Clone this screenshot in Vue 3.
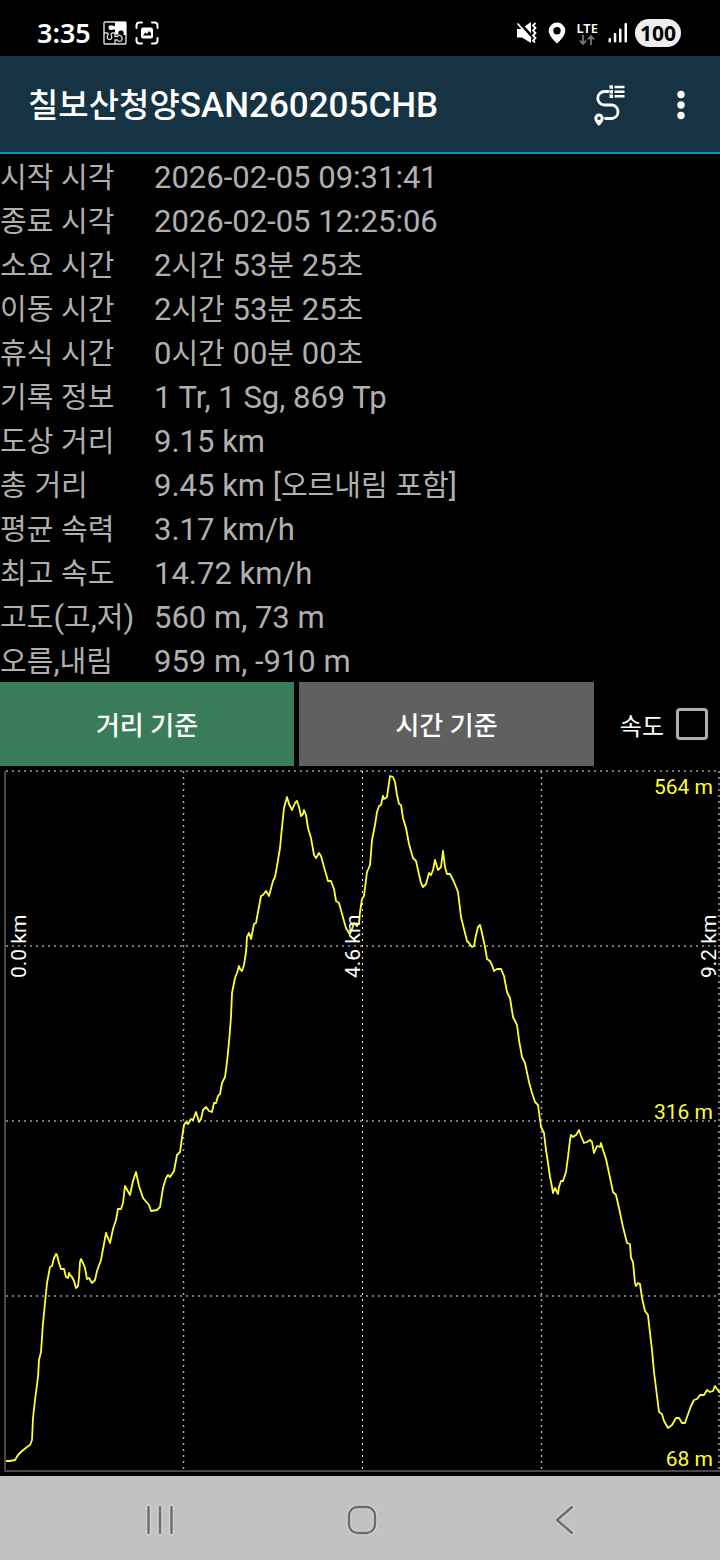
<script setup>
import { ref } from 'vue'

const stats = [
  ['시작 시각', '2026-02-05 09:31:41'],
  ['종료 시각', '2026-02-05 12:25:06'],
  ['소요 시간', '2시간 53분 25초'],
  ['이동 시간', '2시간 53분 25초'],
  ['휴식 시간', '0시간 00분 00초'],
  ['기록 정보', '1 Tr, 1 Sg, 869 Tp'],
  ['도상 거리', '9.15 km'],
  ['총 거리', '9.45 km [오르내림 포함]'],
  ['평균 속력', '3.17 km/h'],
  ['최고 속도', '14.72 km/h'],
  ['고도(고,저)', '560 m, 73 m'],
  ['오름,내림', '959 m, -910 m'],
]

// Hangul runs are set a little smaller than the Latin text around them.
const runs = (text) =>
  text
    .split(/([가-힣]+)/)
    .filter(Boolean)
    .map((t) => ({ t, ko: /[가-힣]/.test(t) }))

const mode = ref('distance')
const showSpeed = ref(false)

const gridY = [1, 176, 351, 526]

const profile = `6,691 10,691 15,690 18,685 22,681 27,677 30,675 32,670 33,648 35,630 38,607 39,590 41,582 43,553 45,533 47,513
50,497 52,496 54,488 56,484 57,485 59,493 61,499 64,499 66,507 68,508 69,503 70,505 72,507 74,511 76,518 78,516
79,508 80,492 81,489 83,493 85,498 87,509 89,508 92,513 95,510 97,501 101,490 103,479 104,474 106,463 108,468 110,473
113,459 116,450 118,439 121,439 123,433 125,416 130,425 133,411 136,402 139,416 143,428 149,435 151,441 157,440 160,437
163,418 166,408 168,405 170,407 174,401 177,385 180,382 182,368 184,355 186,352 188,354 191,349 193,350 196,342 199,352
201,349 203,340 206,337 209,341 212,342 214,333 216,333 218,326 220,324 222,313 225,307 227,292 229,272 231,247 232,223
235,208 237,203 239,196 240,199 242,201 244,195 246,182 247,167 249,163 251,169 254,154 256,153 258,142 261,126 263,125
266,121 269,126 273,111 275,107 277,96 280,78 282,57 284,38 287,27 289,34 292,40 295,33 297,31 299,37 301,46 303,44
304,40 306,45 308,58 311,68 314,85 316,88 319,83 321,86 324,97 328,111 331,111 334,119 336,131 339,133 342,144 346,158
349,163 350,164 352,159 354,153 357,156 359,153 360,142 362,129 364,126 367,102 370,95 372,70 375,55 377,42 379,36
381,35 383,26 384,29 387,27 388,20 390,6 393,7 395,12 397,25 399,34 401,35 403,48 406,58 409,74 413,88 416,91 418,100
421,113 423,117 426,114 429,103 431,105 433,100 435,90 438,100 441,97 443,81 445,97 447,104 450,104 454,112 458,122
461,147 467,171 469,173 472,177 474,176 476,165 478,157 480,155 482,163 485,177 487,189 490,191 492,195 494,201 497,199
501,199 504,206 507,222 510,228 513,247 517,255 519,270 522,287 525,293 529,312 532,323 535,332 538,335 541,357 544,363
546,380 548,393 550,407 552,417 553,423 555,418 558,424 559,417 561,411 563,411 566,402 568,387 570,370 571,365 573,367
576,365 579,360 581,366 584,373 587,372 590,370 592,372 594,383 597,376 600,377 601,373 603,380 606,389 609,403 613,422
616,425 619,438 623,457 627,473 630,474 631,488 633,492 635,513 636,516 638,513 640,514 642,528 645,541 648,545 650,563
652,580 654,602 656,618 659,642 662,644 664,651 668,658 672,655 676,648 679,648 682,653 685,653 687,647 691,636 694,630
697,629 700,625 704,625 707,620 710,622 713,621 715,616 717,619 720,623`
</script>

<template>
  <div class="screen">
    <header class="status">
      <div class="status-group">
        <span class="clock">3:35</span>
        <svg class="puzzle" width="24" height="24" viewBox="0 0 24 24">
          <rect x="1" y="1" width="22" height="22" rx="1" fill="none" stroke="#ddd" stroke-width="1.4" />
          <path d="M12 1H23V14H20.500Q21.500 9.500 18 9.500Q14.500 9.500 15.500 13.500H12V9Q10.500 7.500 9.500 9Q5.500 9.500 5.500 6.500Q5.500 3.500 9.500 4.500Q11 6 12 4.500Z" fill="#fff" />
          <path d="M1 12H4.500Q6 13 4.500 14.500Q3.500 18.500 6.500 18.500Q9.500 18.500 8.500 14.500Q7.500 13 9 12H12V15.500H14.500Q15 13.500 17.500 14.500Q20.500 17 18 20Q15.500 21 14.500 19H12V23" fill="none" stroke="#ddd" stroke-width="1.300" />
        </svg>
        <svg width="24" height="24" viewBox="0 0 24 24" fill="none">
          <path d="M1.500 7V4.500Q1.500 1.500 4.500 1.500H7M17 1.500H19.500Q22.500 1.500 22.500 4.500V7M22.500 17V19.500Q22.500 22.500 19.500 22.500H17M7 22.500H4.500Q1.500 22.500 1.500 19.500V17" stroke="#fff" stroke-width="2" stroke-linecap="round" />
          <rect x="6" y="6.500" width="12" height="11" rx="2" fill="#fff" />
          <path d="M8 14.500L10.500 11.500L12 13L14 10L16 12V14.500Z" fill="#000" />
        </svg>
      </div>
      <div class="status-group right">
        <svg class="mute" width="22" height="24" viewBox="0 0 22 24">
          <path d="M1 8H5L15 1V22L6 16.500H1Z" fill="#fff" />
          <path d="M3 1L17 17" stroke="#000" stroke-width="3" />
          <path d="M1.500 2.500L15 17.500" stroke="#fff" stroke-width="1.800" />
          <path d="M19.500 2L17 4.500L19.500 7L17 9.500L19.500 12L17 14.500L19.500 17L17 19.500L19 21.500" fill="none" stroke="#fff" stroke-width="1.800" />
        </svg>
        <svg class="pin" width="18" height="22" viewBox="0 0 18 22">
          <path d="M9 0.500A8.300 8.300 0 0 0 0.700 8.800C0.700 14.500 9 21.500 9 21.500S17.300 14.500 17.300 8.800A8.300 8.300 0 0 0 9 0.500ZM9 5A3.700 3.700 0 1 1 9 12.400A3.700 3.700 0 1 1 9 5Z" fill="#fff" fill-rule="evenodd" />
        </svg>
        <div class="lte">
          <span>LTE</span>
          <svg width="16" height="10" viewBox="0 0 16 10" fill="none" stroke="#777" stroke-width="1.800">
            <path d="M4 0V9M0.800 5.500L4 9L7.200 5.500M12 10V1M8.800 4.500L12 1L15.200 4.500" />
          </svg>
        </div>
        <svg class="signal" width="20" height="20" viewBox="0 0 20 20" fill="#fff">
          <rect x="0.500" y="15" width="2.500" height="4.500" rx="1" />
          <rect x="5.800" y="10" width="2.500" height="9.500" rx="1" />
          <rect x="11" y="5.500" width="2.500" height="14" rx="1" />
          <rect x="16.500" y="0" width="2.500" height="19.500" rx="1" />
        </svg>
        <span class="battery">100</span>
      </div>
    </header>

    <div class="appbar">
      <h1><span v-for="(r, i) in runs('칠보산청양SAN260205CHB')" :key="i" :class="{ ko: r.ko }">{{ r.t }}</span></h1>
      <button class="icon-btn" type="button" aria-label="경로 목록">
        <svg width="34" height="44" viewBox="0 0 34 44" fill="none" stroke="#fff">
          <path d="M15 8.500H11.500A6.500 6.500 0 0 0 11.500 22H19A6.800 6.800 0 0 1 19 35.500H12.500" stroke-width="2.800" stroke-linecap="round" />
          <path d="M21.500 4H31.500M21.500 8.700H31.500M21.500 13.300H31.500" stroke-width="2.400" />
          <path d="M16.500 4H20M16.500 8.700H20M16.500 13.300H20" stroke-width="3.600" />
          <path d="M6 30.500A4.700 4.700 0 0 0 1.300 35.200C1.300 38.500 6 43 6 43S10.700 38.500 10.700 35.200A4.700 4.700 0 0 0 6 30.500ZM6 33.500A1.700 1.700 0 1 1 6 36.900A1.700 1.700 0 1 1 6 33.500Z" fill="#fff" stroke="none" fill-rule="evenodd" />
        </svg>
      </button>
      <button class="icon-btn" type="button" aria-label="더보기">
        <svg width="8" height="30" viewBox="0 0 8 30" fill="#fff">
          <circle cx="4" cy="4.500" r="3.700" /><circle cx="4" cy="15" r="3.700" /><circle cx="4" cy="25.500" r="3.700" />
        </svg>
      </button>
    </div>

    <table class="stats">
      <tbody>
        <tr v-for="[label, value] in stats" :key="label">
          <th scope="row"><span v-for="(r, i) in runs(label)" :key="i" :class="{ ko: r.ko }">{{ r.t }}</span></th>
          <td><span v-for="(r, i) in runs(value)" :key="i" :class="{ ko: r.ko }">{{ r.t }}</span></td>
        </tr>
      </tbody>
    </table>

    <div class="controls">
      <button type="button" class="mode" :class="{ active: mode === 'distance' }" @click="mode = 'distance'">거리 기준</button>
      <button type="button" class="mode" :class="{ active: mode === 'time' }" @click="mode = 'time'">시간 기준</button>
      <label class="speed">속도<input v-model="showSpeed" type="checkbox" /></label>
    </div>

    <svg class="chart" viewBox="0 0 720 710" role="img" aria-label="고도 그래프">
      <g transform="translate(0 4)" fill="none">
        <g stroke="#777" stroke-width="2" stroke-dasharray="2 4">
          <path v-for="y in gridY" :key="y" :d="`M6 ${y}H720`" />
          <path d="M719 1V700" />
        </g>
        <g stroke-dasharray="2 4">
          <path d="M183.500 1V700M541.500 1V700" stroke="#aaa" stroke-width="1.500" />
          <path d="M362.500 1V700" stroke="#fff" />
        </g>
        <path d="M5 1V701H720" stroke="#484848" stroke-width="2" />
        <polyline :points="profile" stroke="#ffff30" stroke-width="1.800" stroke-linejoin="round" />
        <g fill="#ffff30" text-anchor="end">
          <text x="713" y="24">564 m</text>
          <text x="713" y="349">316 m</text>
          <text x="713" y="696">68 m</text>
        </g>
        <g fill="#fff">
          <text transform="translate(26 208) rotate(-90)">0.0 km</text>
          <text transform="translate(360 208) rotate(-90)">4.6 km</text>
          <text transform="translate(716 208) rotate(-90)">9.2 km</text>
        </g>
      </g>
    </svg>

    <nav class="navbar">
      <button type="button" aria-label="최근 앱">
        <svg width="34" height="34" viewBox="0 0 34 34" fill="none" stroke-linecap="round">
          <path d="M5.500 4V30M17 4V30M28.500 4V30" stroke="#d2d2d2" stroke-width="5" />
          <path d="M5.500 4V30M17 4V30M28.500 4V30" stroke="#6c6c6c" stroke-width="2.400" />
        </svg>
      </button>
      <button type="button" aria-label="홈">
        <svg width="34" height="34" viewBox="0 0 34 34" fill="none">
          <rect x="4" y="4" width="26" height="26" rx="8.500" stroke="#d2d2d2" stroke-width="5" />
          <rect x="4" y="4" width="26" height="26" rx="8.500" stroke="#6c6c6c" stroke-width="2.400" />
        </svg>
      </button>
      <button type="button" aria-label="뒤로">
        <svg width="34" height="34" viewBox="0 0 34 34" fill="none" stroke-linecap="round" stroke-linejoin="round">
          <path d="M25 4L10 17L25 30" stroke="#d2d2d2" stroke-width="5" />
          <path d="M25 4L10 17L25 30" stroke="#6c6c6c" stroke-width="2.400" />
        </svg>
      </button>
    </nav>
  </div>
</template>

<style>
body {
  background: #000;
}
</style>

<style scoped>
.screen {
  display: flex;
  flex-direction: column;
  min-height: 100vh;
  background: #000;
  color: #fff;
  font-family: Roboto, "Noto Sans CJK KR", sans-serif;
}
button {
  padding: 0;
  border: 0;
  background: none;
  color: inherit;
  font-family: inherit;
}
svg {
  display: block;
}
.status {
  display: flex;
  justify-content: space-between;
  align-items: center;
  height: 56px;
  padding: 10px 39px 0 37px;
  box-sizing: border-box;
  font-family: "Noto Sans", sans-serif;
}
.status-group {
  display: flex;
  align-items: center;
  gap: 8px;
}
.clock {
  margin-right: 4px;
  font-size: 27px;
  font-weight: 600;
  line-height: 28px;
}
.right {
  gap: 10px;
}
.lte {
  display: flex;
  flex-direction: column;
  align-items: center;
  gap: 1px;
  font-size: 13px;
  font-weight: 600;
  line-height: 12px;
}
.battery {
  margin-left: -3px;
  padding: 0 5px;
  border-radius: 14px;
  background: #eee;
  color: #000;
  font-size: 21px;
  font-weight: 700;
  line-height: 28px;
}
.appbar {
  display: flex;
  align-items: center;
  height: 98px;
  padding: 2px 35px 0 28px;
  box-sizing: border-box;
  border-bottom: 2px solid #1191bd;
  background: #153343;
}
h1 {
  flex: 1;
  margin: 0;
  padding-top: 2px;
  font-size: 35px;
  font-weight: 500;
  line-height: 44px;
}
h1 .ko {
  font-size: 33px;
}
.icon-btn + .icon-btn {
  margin-left: 50px;
}
.stats {
  width: 100%;
  border-collapse: collapse;
  color: #b0b0b0;
  font-size: 31px;
}
.stats tr {
  height: 44px;
}
.stats th,
.stats td {
  padding: 4px 0 0;
  font-weight: 400;
  line-height: 40px;
  text-align: left;
  white-space: nowrap;
}
.stats th {
  width: 154px;
}
.stats .ko {
  font-size: 29px;
  line-height: 1;
}
.controls {
  display: grid;
  grid-template-columns: 294fr 295fr 121fr;
  gap: 5px;
  height: 84px;
}
.mode {
  padding-bottom: 2px;
  background: #606060;
  font-size: 26px;
  font-weight: 500;
}
.mode.active {
  background: #3a7b5a;
}
.speed {
  display: flex;
  align-items: center;
  justify-content: flex-end;
  gap: 12px;
  padding-right: 12px;
  font-size: 24px;
}
.speed input {
  width: 32px;
  height: 32px;
  margin: 0;
  border: 3px solid #b0b0b0;
  border-radius: 4px;
  appearance: none;
}
.speed input:checked {
  background: #3a7b5a;
}
.chart {
  width: 100%;
  height: auto;
}
.chart text {
  font-size: 21px;
}
.navbar {
  display: flex;
  flex: 1;
  align-items: center;
  justify-content: center;
  gap: 34px;
  min-height: 84px;
  padding: 4px 0 0 4px;
  box-sizing: border-box;
  background: #c1c1c1;
}
.navbar button {
  flex: 0 1 168px;
  display: grid;
  place-items: center;
}
</style>
